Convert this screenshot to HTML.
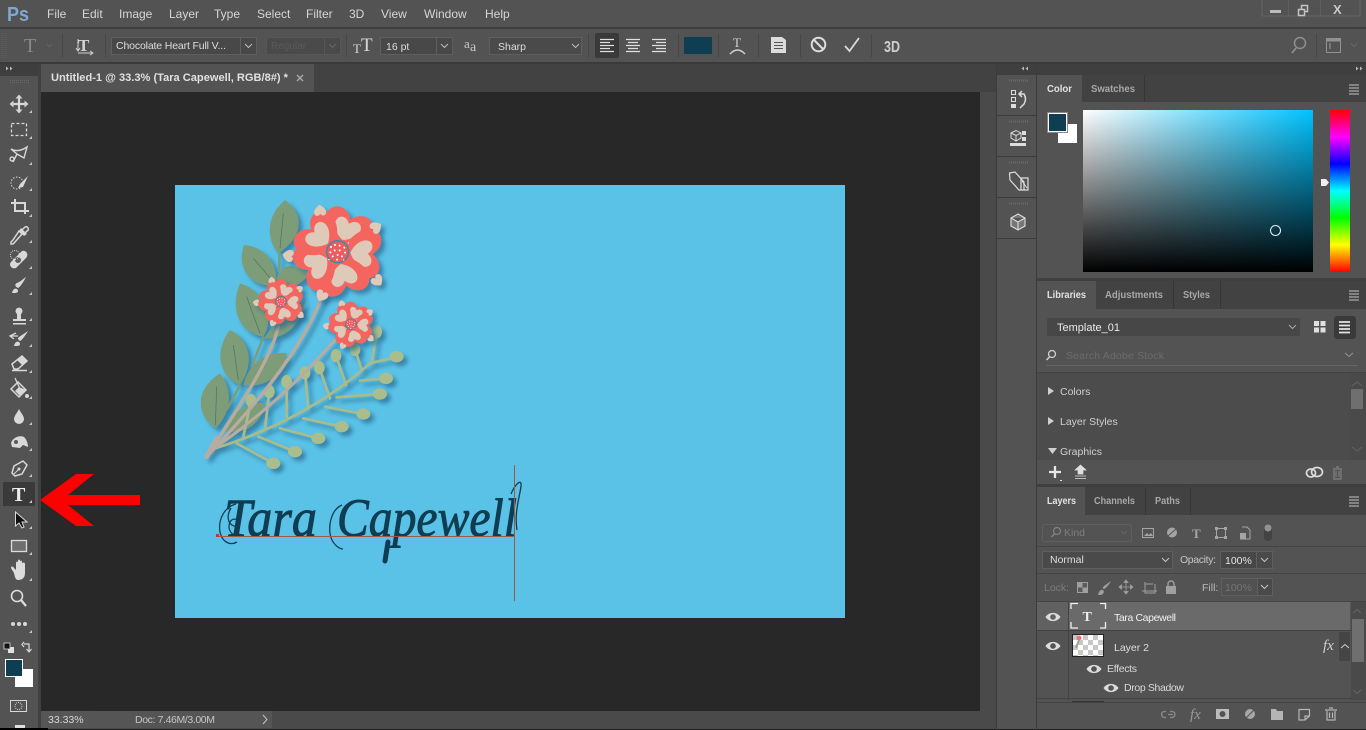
<!DOCTYPE html>
<html><head><meta charset="utf-8"><title>Photoshop</title>
<style>
html,body{margin:0;padding:0;background:#535353;overflow:hidden}
svg{display:block;font-family:"Liberation Sans",sans-serif;font-size:11px}
.m{fill:#d6d6d6;font-size:12px}
.t{fill:#e2e2e2;font-weight:bold;font-size:10px}
.d{fill:#a8a8a8;font-weight:bold;font-size:10px}
.l{fill:#cfcfcf;font-size:10.5px}
.i{fill:#d4d4d4}
.s{fill:none;stroke:#d4d4d4;stroke-width:1.5}
.tri{fill:#c8c8c8}
</style></head><body>
<svg width="1366" height="730" viewBox="0 0 1366 730" xmlns="http://www.w3.org/2000/svg">
<defs>
<linearGradient id="gh" x1="0" x2="1" y1="0" y2="0"><stop offset="0" stop-color="#fff"/><stop offset="1" stop-color="#00c2ff"/></linearGradient>
<linearGradient id="gv" x1="0" x2="0" y1="0" y2="1"><stop offset="0" stop-color="#000" stop-opacity="0"/><stop offset="1" stop-color="#000"/></linearGradient>
<linearGradient id="hue" x1="0" x2="0" y1="0" y2="1"><stop offset="0" stop-color="#f00"/><stop offset=".167" stop-color="#f0f"/><stop offset=".333" stop-color="#00f"/><stop offset=".5" stop-color="#0ff"/><stop offset=".667" stop-color="#0f0"/><stop offset=".833" stop-color="#ff0"/><stop offset="1" stop-color="#f00"/></linearGradient>
<filter id="sh" x="-20%" y="-20%" width="150%" height="150%"><feDropShadow dx="12" dy="12" stdDeviation="6" flood-color="#22658a" flood-opacity=".65"/></filter>
<g id="petal">
<path fill="#f4655f" d="M0 -10C-62 -38 -88 -86 -66 -116C-50 -136 -15 -130 0 -104C15 -130 50 -136 66 -116C88 -86 62 -38 0 -10Z"/>
<path fill="#dfc9b8" d="M0 -38C-34 -52 -47 -80 -36 -96C-27 -108 -9 -104 0 -90C9 -104 27 -108 36 -96C47 -80 34 -52 0 -38Z"/>
</g>
<g id="flower">
<use href="#petal" transform="rotate(22)"/><use href="#petal" transform="rotate(94)"/><use href="#petal" transform="rotate(166)"/><use href="#petal" transform="rotate(238)"/><use href="#petal" transform="rotate(310)"/>
<circle r="35" fill="#2a8fab"/><circle r="31" fill="#ef5b60"/>
<g fill="#fff"><circle cx="-20" cy="-14" r="3"/><circle cx="-8" cy="-20" r="3"/><circle cx="6" cy="-18" r="3"/><circle cx="20" cy="-12" r="3"/><circle cx="-22" cy="2" r="3"/><circle cx="-9" cy="-4" r="3"/><circle cx="6" cy="-4" r="3"/><circle cx="22" cy="3" r="3"/><circle cx="-15" cy="14" r="3"/><circle cx="0" cy="10" r="3"/><circle cx="13" cy="14" r="3"/><circle cx="-2" cy="24" r="3"/><circle cx="18" cy="25" r="2"/><circle cx="-26" cy="24" r="2"/><circle cx="32" cy="-26" r="2"/></g>
</g>
<path id="mini" fill="#dfc9b8" d="M0 18C-16 8 -22 -4 -16 -12C-10 -18 -3 -15 0 -9C3 -15 10 -18 16 -12C22 -4 16 8 0 18Z"/>
<path id="eye" d="M-7.5 0C-4 -5.5 4 -5.5 7.5 0C4 5.500 -4 5.500 -7.5 0ZM0 -2.800A2.800 2.800 0 1 0 0.010 -2.800Z" fill="#dcdcdc" fill-rule="evenodd"/>
<path id="cor" d="M3 0V3H0Z"/>
<pattern id="chk" width="10" height="10" patternUnits="userSpaceOnUse" x="1073" y="635"><rect width="10" height="10" fill="#fff"/><rect width="5" height="5" fill="#c8c8c8"/><rect x="5" y="5" width="5" height="5" fill="#c8c8c8"/></pattern>
</defs>

<!-- base -->
<rect width="1366" height="730" fill="#535353"/>
<rect y="27" width="1366" height="2" fill="#3d3d3d"/>
<rect y="62" width="1366" height="2" fill="#3a3a3a"/>

<!-- menu -->
<text x="7" y="21" font-size="20" font-weight="bold" fill="#7ea8d2" textLength="22" lengthAdjust="spacingAndGlyphs">Ps</text>
<text class="m" x="47" y="18">File</text><text class="m" x="82" y="18">Edit</text><text class="m" x="119" y="18">Image</text><text class="m" x="169" y="18">Layer</text><text class="m" x="214" y="18">Type</text><text class="m" x="257" y="18">Select</text><text class="m" x="306" y="18">Filter</text><text class="m" x="349" y="18">3D</text><text class="m" x="381" y="18">View</text><text class="m" x="424" y="18">Window</text><text class="m" x="485" y="18">Help</text>
<!-- window controls -->
<path d="M1262 0V15.500Q1262 16 1264 16H1358Q1360 16 1360 15V0" fill="none" stroke="#666"/>
<path d="M1288.500 0V16M1320.500 0V16" stroke="#5f5f5f"/>
<rect x="1270" y="10" width="11" height="3" fill="#bbb"/>
<path d="M1298.500 9.500h6v6h-6zM1301.500 9V5.500h6v6H1305" fill="none" stroke="#c4c4c4" stroke-width="1.500"/>
<text x="1333" y="14" font-size="13" font-weight="bold" fill="#c8c8c8">X</text>

<!-- options bar -->
<path d="M2 33V58M4 33V58M6 33V58" stroke="#5f5f5f" stroke-dasharray="1 1"/>
<text x="24" y="52" font-family="Liberation Serif" font-size="20" fill="#888">T</text>
<path d="M47 44l2.500 3 2.500-3" fill="none" stroke="#666"/>
<path d="M62.500 34V57M105.500 34V57M346.500 34V57M588.500 34V57M678.500 34V57M718.500 34V57M758.500 34V57M800.500 34V57M871.500 34V57M1316.500 34V57" stroke="#464646"/>
<text x="78" y="51" font-family="Liberation Serif" font-weight="bold" font-size="17" fill="#d0d0d0">T</text>
<path d="M78 39V50M76 48l2 3 2-3M78 53H92M90 51l3 2-3 2" fill="none" stroke="#d0d0d0"/>
<g fill="#484848" stroke="#5f5f5f">
<rect x="111.500" y="37.500" width="129" height="17"/><rect x="240.500" y="37.500" width="16" height="17"/>
<rect x="380.500" y="37.500" width="56" height="17"/><rect x="436.500" y="37.500" width="16" height="17"/>
<rect x="489.500" y="37.500" width="92" height="17" fill="#4a4a4a"/>
</g>
<g fill="#4a4a4a" stroke="#575757"><rect x="266.500" y="37.500" width="58" height="17"/><rect x="324.500" y="37.500" width="16" height="17"/></g>
<text x="116" y="49" fill="#dedede" font-size="10.500" textLength="110">Chocolate Heart Full V...</text>
<text x="271" y="49" fill="#5a5a5a" font-size="10">Regular</text>
<text x="386" y="50" fill="#dedede" font-size="10.500">16 pt</text>
<text x="498" y="50" fill="#dedede" font-size="10.500">Sharp</text>
<path d="M245 44l3.500 3.500 3.500-3.500M441 44l3.500 3.500 3.500-3.500M572 44l3.500 3.500 3.500-3.500" fill="none" stroke="#bcbcbc"/>
<path d="M329 44l3.500 3.500 3.500-3.500" fill="none" stroke="#696969"/>
<text x="353" y="53" font-family="Liberation Serif" font-size="13" fill="#d8d8d8">T</text>
<text x="361" y="51" font-family="Liberation Serif" font-size="19" fill="#d8d8d8">T</text>
<text x="464" y="48" font-family="Liberation Serif" font-size="13" fill="#c8c8c8">a</text>
<text x="470" y="51" font-family="Liberation Serif" font-size="14" fill="#c8c8c8">a</text>
<rect x="595" y="33" width="24" height="25" rx="2" fill="#3a3a3a"/>
<g fill="none" stroke="#e0e0e0" stroke-width="1.300">
<path d="M600 39.500h14M600 42.500h10M600 45.500h14M600 48.500h10M600 51.500h14"/>
<path d="M626 39.500h14M628 42.500h10M626 45.500h14M628 48.500h10M626 51.500h14"/>
<path d="M652 39.500h14M656 42.500h10M652 45.500h14M656 48.500h10M652 51.500h14"/>
</g>
<rect x="684" y="37" width="28" height="17" fill="#0f3d52"/>
<text x="733" y="47" font-family="Liberation Serif" font-size="13" fill="#d0d0d0">T</text>
<path d="M730 54Q737.500 46 745 54" fill="none" stroke="#d0d0d0" stroke-width="1.500"/>
<path d="M771 37h11l4 3v13h-15z" fill="#dcdcdc"/><path d="M774 42.500h9M774 45.500h9M774 48.500h9" stroke="#555"/>
<circle cx="818.500" cy="44.500" r="6.800" fill="none" stroke="#dcdcdc" stroke-width="2"/><path d="M814 40l9 9" stroke="#dcdcdc" stroke-width="2"/>
<path d="M845 46l4.500 5L859 38" fill="none" stroke="#dcdcdc" stroke-width="1.800"/>
<text x="884" y="52" font-size="16" font-weight="bold" fill="#cfcfcf" textLength="16" lengthAdjust="spacingAndGlyphs">3D</text>
<circle cx="1300" cy="43" r="5.500" fill="none" stroke="#8e8e8e" stroke-width="1.500"/><path d="M1296 48l-4 5" stroke="#8e8e8e" stroke-width="1.800"/>
<rect x="1326.500" y="38.500" width="14" height="14" fill="none" stroke="#929292"/><rect x="1327" y="39" width="13" height="2.500" fill="#929292"/><rect x="1329" y="43" width="2" height="6" fill="#777"/>
<path d="M1351 43.500l3 3 3-3" fill="none" stroke="#696969"/>

<!-- left tools column -->
<rect x="0" y="64" width="38" height="12" fill="#3e3e3e"/>
<rect x="38" y="64" width="3" height="666" fill="#404040"/>
<path d="M6 66.500l2.500 2-2.500 2zM10 66.500l2.500 2-2.500 2z" fill="#b9b9b9"/>
<path d="M10 80.500H29M10 82.500H29" stroke="#686868" stroke-dasharray="1 1"/>

<!-- tab bar / canvas -->
<rect x="41" y="64" width="956" height="28" fill="#424242"/>
<rect x="41" y="64" width="273" height="28" fill="#535353"/>
<text x="51" y="81" font-size="11" font-weight="bold" fill="#e0e0e0" textLength="237" lengthAdjust="spacingAndGlyphs">Untitled-1 @ 33.3% (Tara Capewell, RGB/8#) *</text>
<path d="M297 75l6 6M303 75l-6 6" stroke="#a5a5a5" stroke-width="1.500"/>
<rect x="41" y="92" width="939" height="619" fill="#282828"/>
<rect x="980" y="92" width="17" height="619" fill="#4a4a4a"/>
<rect x="41" y="711" width="956" height="18" fill="#4a4a4a"/>
<rect x="41" y="711" width="48" height="17" fill="#565656"/>
<rect x="89" y="711" width="183" height="17" fill="#555"/>
<text x="48" y="723" font-size="10.500" fill="#d6d6d6">33.33%</text>
<text x="135" y="723" font-size="10.500" fill="#c4c4c4" textLength="80">Doc: 7.46M/3.00M</text>
<path d="M263 715l4 4.500-4 4.500" fill="none" stroke="#c4c4c4"/>
<rect x="0" y="728" width="48" height="2" fill="#000"/>
<rect x="48" y="729" width="1318" height="1" fill="#1e1e1e"/>

<!-- document -->
<rect x="175" y="185" width="670" height="433" fill="#5bc2e7"/>

<g transform="translate(190 190) scale(.33333)">
<g filter="url(#sh)">
<g fill="#7d9c78">
<path d="M285 30C225 80 230 150 265 190C340 140 345 75 285 30Z"/>
<path d="M162 165C135 240 190 295 255 285C270 225 225 170 162 165Z"/>
<path d="M150 280C115 365 155 430 220 440C260 375 215 300 150 280Z"/>
<path d="M120 420C65 490 95 565 150 585C195 520 180 450 120 420Z"/>
<path d="M90 550C10 600 20 680 78 715C130 660 125 590 90 550Z"/>
<path d="M355 255C310 210 270 225 258 270C285 300 325 295 355 255Z"/>
<path d="M345 330C330 350 250 400 222 445C290 450 340 395 345 330Z"/>
<path d="M290 490C225 480 175 525 160 585C225 595 285 555 290 490Z"/>
<path d="M225 640C175 630 115 675 98 722C155 740 215 705 225 640Z"/>
</g>
<g fill="none" stroke="#7d9c78" stroke-width="7"><path d="M268 190V245M220 440L185 530M150 585L110 660"/></g>
<g fill="none" stroke="#4c6f66" stroke-width="2"><path d="M280 70L270 175M190 205L250 275M170 320L210 430M130 465L145 570M80 590L76 705"/></g>
<g fill="none" stroke="#a7bb8c" stroke-width="8" stroke-linecap="round">
<path d="M75 775Q350 690 540 520L620 500"/>
<path d="M250 820L140 760M315 785L205 740M385 745L270 715M455 710L340 685M520 672L405 650M570 612L440 622M588 565L510 572"/>
<path d="M183 632L160 740M238 605L225 715M290 575L290 680M345 548L355 655M388 533L420 625M438 497L468 585M495 478L515 540M560 425L545 520"/>
</g>
<g fill="#a9bd8d">
<ellipse cx="250" cy="820" rx="21" ry="17"/><ellipse cx="315" cy="785" rx="21" ry="17"/><ellipse cx="385" cy="745" rx="21" ry="17"/><ellipse cx="455" cy="710" rx="21" ry="17"/><ellipse cx="520" cy="672" rx="21" ry="17"/><ellipse cx="570" cy="612" rx="21" ry="17"/><ellipse cx="588" cy="565" rx="21" ry="17"/><ellipse cx="620" cy="500" rx="21" ry="17"/>
<ellipse cx="560" cy="425" rx="16" ry="20"/><ellipse cx="495" cy="478" rx="16" ry="20"/><ellipse cx="438" cy="497" rx="16" ry="20"/><ellipse cx="388" cy="533" rx="16" ry="20"/><ellipse cx="345" cy="548" rx="16" ry="20"/><ellipse cx="290" cy="575" rx="16" ry="20"/><ellipse cx="238" cy="605" rx="16" ry="20"/><ellipse cx="183" cy="632" rx="16" ry="20"/>
</g>
<g fill="none" stroke="#b8aca0" stroke-linecap="round">
<path stroke-width="10" d="M50 800C120 690 240 520 265 410"/>
<path stroke-width="10" d="M50 800C200 640 370 450 425 235"/>
<path stroke-width="9" d="M50 790C200 690 330 570 435 450"/>
<path stroke-width="14" d="M50 800L80 745"/>
</g>
</g>
<g filter="url(#sh)">
<use href="#flower" transform="translate(443 185)"/>
<use href="#mini" transform="translate(390 62) rotate(175)"/>
<use href="#mini" transform="translate(558 112) rotate(235)"/>
<use href="#mini" transform="translate(562 272) rotate(320)"/>
<use href="#mini" transform="translate(395 317) rotate(30)"/>
<use href="#mini" transform="translate(295 197) rotate(100)"/>
</g>
<g filter="url(#sh)">
<use href="#flower" transform="translate(273 335) scale(.5)"/>
<use href="#mini" transform="translate(245 270) rotate(170) scale(.55)"/><use href="#mini" transform="translate(330 296) rotate(235) scale(.55)"/><use href="#mini" transform="translate(333 376) rotate(310) scale(.55)"/><use href="#mini" transform="translate(248 400) rotate(30) scale(.55)"/><use href="#mini" transform="translate(198 338) rotate(100) scale(.55)"/>
</g>
<g filter="url(#sh)">
<use href="#flower" transform="translate(483 403) scale(.5)"/>
<use href="#mini" transform="translate(455 340) rotate(170) scale(.55)"/><use href="#mini" transform="translate(540 366) rotate(235) scale(.55)"/><use href="#mini" transform="translate(543 446) rotate(310) scale(.55)"/><use href="#mini" transform="translate(458 468) rotate(30) scale(.55)"/><use href="#mini" transform="translate(408 408) rotate(100) scale(.55)"/>
</g>
</g>

<!-- script text -->
<g font-family="Liberation Serif" font-style="italic" font-size="54" fill="#0f3d52" stroke="#0f3d52" stroke-width=".9">
<text x="224" y="536" textLength="93" lengthAdjust="spacingAndGlyphs">Tara</text>
<text x="337" y="536" textLength="180" lengthAdjust="spacingAndGlyphs">Capewell</text>
</g>
<g fill="none" stroke="#0f3d52" stroke-width="1.300">
<path d="M236 504C224 507 218 520 220 532C222 542 230 546 237 542"/>
<path d="M231 508C226 516 228 524 234 526C240 527 240 519 234 519C228 520 226 532 236 536"/>
<path d="M342 505C330 510 327 530 332 540C335 546 340 549 343 549"/>
<path d="M511 494C515 484 522 478 521 486C520 496 514 512 517 530"/>
</g>
<path d="M388 542L385 561" stroke="#0f3d52" stroke-width="5" stroke-linecap="round"/>
<path d="M216 536.500H514.500M514.500 465V601" stroke="#a5573f" stroke-width="1" fill="none"/>
<rect x="216" y="534" width="3" height="3" fill="#d9301f"/>

<!-- red arrow -->
<path d="M40 500L76 474H94L68 495H140V505H68L94 526H76Z" fill="#fd0000"/>

<!-- tools -->
<rect x="3" y="482" width="32" height="24" rx="1" fill="#3a3a3a"/>
<g class="i">
<path d="M11 104h16M19 96v16" stroke="#d8d8d8" stroke-width="2.200"/>
<path d="M19 94.500l3.500 4h-7zM19 113.500l3.500-4h-7zM9.500 104l4-3.500v7zM28.500 104l-4-3.500v7z"/>
</g>
<rect x="11.500" y="123.500" width="15" height="12" fill="none" stroke="#d8d8d8" stroke-width="1.300" stroke-dasharray="3 2"/>
<path d="M11 149Q18 153 27 147L24 158L17 154ZM17 154L13 162M12 157a2 2 0 1 0 .1 0" fill="none" stroke="#d8d8d8" stroke-width="1.400"/>
<circle cx="17" cy="183" r="6" fill="none" stroke="#d8d8d8" stroke-dasharray="1.500 1.500"/><path d="M28 176L20 184L18 188L23 187Z" fill="#d8d8d8"/>
<path d="M11 203h4v-4M15 203V211h10M15 203h10v11M25 211h4" fill="none" stroke="#d8d8d8" stroke-width="2"/>
<path d="M13 240L11 242V244H13L15 242L22 234L19 231ZM22 230L25 227Q27 226 28 228Q29 230 27 231L24 234Z" fill="none" stroke="#d8d8d8" stroke-width="1.500"/><path d="M21 228L27 234L24 236L19 231Z" fill="#d8d8d8"/>
<path d="M11 262L22 251Q25 250 27 253Q28 256 26 258L16 268Q13 269 11 267Q9 264 11 262Z" fill="#d8d8d8"/><circle cx="18" cy="260" r="3" fill="#5b5b5b"/><circle cx="15" cy="255" r="4.500" fill="none" stroke="#d8d8d8" stroke-dasharray="1 1"/>
<path d="M26 277C23 283 20 287 18 288C14 286 15 284 17 283C20 282 23 279 26 277ZM12 293C13 289 15 288 17 289C19 291 18 293 15 293Z" fill="#d8d8d8"/>
<path d="M13 321V319H17V314A3.500 3.500 0 1 1 21 314V319H26V321ZM13 323H26V324.500H13Z" fill="#d8d8d8"/>
<path d="M28 331C25 336 22 340 20 341C17 339 18 338 19 337C22 335 25 333 28 331ZM14 346C15 342 17 341 19 342C21 344 20 346 17 346Z" fill="#d8d8d8"/><path d="M16 333L10 336L14 339M10 336H18" fill="none" stroke="#d8d8d8" stroke-width="1.300"/>
<path d="M12 364L22 356L27 361L18 369H14ZM12 370.500H27" fill="none" stroke="#d8d8d8" stroke-width="1.500"/><path d="M17 360L22 356L27 361L22 365Z" fill="#d8d8d8"/>
<path d="M11 389L18 382L26 390L19 397Z" fill="none" stroke="#d8d8d8" stroke-width="1.500"/><path d="M15 378L21 391" stroke="#d8d8d8" stroke-width="1.300"/><circle cx="27" cy="396" r="2" fill="#d8d8d8"/><path d="M19 387L26 390L20 396L15 391Z" fill="#d8d8d8"/>
<path d="M19 409C21 413 24 416 24 419A5 5 0 0 1 14 419C14 416 17 413 19 409Z" fill="#d8d8d8"/>
<path d="M11 443C13 437 20 435 24 437C27 440 28 444 28 447L23 445L20 448L12 447Z" fill="#d8d8d8"/><circle cx="16" cy="442" r="2" fill="#5b5b5b"/>
<path d="M12 473L14 466L23 461L27 465L22 474L15 476Z" fill="none" stroke="#d8d8d8" stroke-width="1.500"/><circle cx="19" cy="469" r="1.500" fill="#d8d8d8"/><path d="M13 475L18 470" stroke="#d8d8d8"/>
<text x="12" y="501" font-family="Liberation Serif" font-weight="bold" font-size="20" fill="#ececec">T</text>
<path d="M15.500 512V526L19 523L22 528L24 527L22 522H27Z" fill="#111" stroke="#d8d8d8" stroke-width="1"/>
<rect x="11.500" y="540.500" width="15" height="11" fill="#6f6f6f" stroke="#dcdcdc" stroke-width="1.300"/>
<path d="M14 573L11 568C11 566 13 566 14 568L16 570V563C16 561 18 561 18 563V568V561C18 559 20 559 20 561V568V562C20 560 22 560 22 562V569V564C22 562 25 562 25 564V573C25 578 22 580 18 580C16 580 15 578 14 573Z" fill="#dcdcdc"/>
<circle cx="17" cy="596" r="5.500" fill="none" stroke="#dcdcdc" stroke-width="1.600"/><path d="M21 600L26 606" stroke="#dcdcdc" stroke-width="2.300"/>
<circle cx="13" cy="624" r="2" fill="#d8d8d8"/><circle cx="19" cy="624" r="2" fill="#d8d8d8"/><circle cx="25" cy="624" r="2" fill="#d8d8d8"/>
<g class="tri">
<use href="#cor" x="29" y="110"/><use href="#cor" x="29" y="136"/><use href="#cor" x="29" y="162"/><use href="#cor" x="29" y="188"/><use href="#cor" x="29" y="214"/><use href="#cor" x="29" y="240"/><use href="#cor" x="29" y="266"/><use href="#cor" x="29" y="292"/><use href="#cor" x="29" y="318"/><use href="#cor" x="29" y="344"/><use href="#cor" x="29" y="370"/><use href="#cor" x="29" y="396"/><use href="#cor" x="29" y="422"/><use href="#cor" x="29" y="448"/><use href="#cor" x="29" y="474"/><use href="#cor" x="29" y="500"/><use href="#cor" x="29" y="526"/><use href="#cor" x="29" y="552"/><use href="#cor" x="29" y="578"/><use href="#cor" x="29" y="630"/>
</g>
<!-- colours -->
<rect x="8" y="647" width="6" height="6" fill="#e0e0e0"/><rect x="4" y="643" width="6" height="6" fill="#111" stroke="#ddd" stroke-width=".8"/>
<path d="M24 644H29V651M26.500 649L29 652L31.500 649M24 642L22 644.500L24 647" fill="none" stroke="#d8d8d8" stroke-width="1.200"/>
<rect x="15" y="669" width="18" height="18" fill="#fff"/>
<rect x="5.500" y="659.500" width="17" height="17" fill="#0f3d52" stroke="#fff"/>
<rect x="10.500" y="700.500" width="16" height="11" fill="none" stroke="#d8d8d8"/><circle cx="18.500" cy="706" r="3.500" fill="none" stroke="#d8d8d8" stroke-dasharray="1 1"/>
<rect x="15" y="725" width="10" height="3" fill="#ddd"/>

<!-- right dock -->
<rect x="997" y="64" width="369" height="11" fill="#3f3f3f"/>
<rect x="1036" y="64" width="1" height="666" fill="#3c3c3c"/>
<rect x="996" y="64" width="1" height="666" fill="#3c3c3c"/>
<path d="M1028 66.500l-2.500 2 2.500 2zM1024 66.500l-2.500 2 2.500 2z" fill="#b9b9b9"/>
<path d="M1356 66.500l2.500 2-2.500 2zM1360 66.500l2.500 2-2.500 2z" fill="#b9b9b9"/>
<path d="M997 115.500H1036M997 156.500H1036M997 197.500H1036M997 238.500H1036" stroke="#3c3c3c"/>
<path d="M1009 80.500H1028M1009 121.500H1028M1009 162.500H1028M1009 203.500H1028" stroke="#6b6b6b" stroke-dasharray="1 1" stroke-width="2"/>
<path d="M1011.500 90.500h4v4h-4zM1011.500 97.500h4v4h-4z" fill="none" stroke="#ddd"/><rect x="1011" y="104" width="5" height="4" fill="#ddd"/>
<path d="M1019 94H1024Q1027 99 1024 104L1020 108M1022 91L1019 94L1022 97" fill="none" stroke="#ddd" stroke-width="1.500"/>
<path d="M1011 133L1016 130.500L1021 133V138L1016 141L1011 138Z M1011 133L1016 135.500L1021 133M1016 135.500V141" fill="none" stroke="#ddd"/><rect x="1022" y="131" width="4" height="4" fill="#ddd"/><rect x="1022" y="137" width="4" height="4" fill="#ddd"/><rect x="1010" y="143" width="16" height="3" fill="#ddd"/>
<path d="M1009.500 173L1015 172L1024 182V190L1019 190L1010 180ZM1021 178H1028V190H1021Z" fill="none" stroke="#ddd" stroke-width="1.200"/><path d="M1022 181L1027 188" stroke="#ddd"/>
<path d="M1018 214L1025 218V226L1018 230L1011 226V218ZM1011 218L1018 222L1025 218M1018 222V230" fill="#777" stroke="#ddd" stroke-width="1.100"/>

<!-- color panel -->
<rect x="1037" y="75" width="329" height="27" fill="#424242"/>
<rect x="1037" y="75" width="45" height="27" fill="#535353"/>
<path d="M1144.500 75V102" stroke="#363636"/>
<text class="t" x="1047" y="92" textLength="25" lengthAdjust="spacingAndGlyphs">Color</text><text class="d" x="1091" y="92" textLength="44" lengthAdjust="spacingAndGlyphs">Swatches</text>
<path d="M1349 85h10M1349 88h10M1349 91h10M1349 94h10" stroke="#c4c4c4"/>
<rect x="1058" y="124" width="19" height="19" fill="#fff"/>
<rect x="1047" y="112" width="21" height="21" fill="#888"/>
<rect x="1048" y="113" width="19" height="19" fill="#fff"/>
<rect x="1049" y="114" width="17" height="17" fill="#0f3d52"/>
<rect x="1083" y="110" width="230" height="162" fill="url(#gh)"/>
<rect x="1083" y="110" width="230" height="162" fill="url(#gv)"/>
<circle cx="1275.500" cy="230.500" r="5" fill="none" stroke="#dcecf2" stroke-width="1.100"/>
<rect x="1330" y="110" width="20" height="162" fill="url(#hue)"/>
<path d="M1321 179H1326L1329 182.500L1326 186H1321Z" fill="#eee"/>
<rect x="1037" y="278" width="329" height="3" fill="#3f3f3f"/>

<!-- libraries -->
<rect x="1037" y="281" width="329" height="28" fill="#424242"/>
<rect x="1037" y="281" width="59" height="28" fill="#535353"/>
<path d="M1173.500 281V309M1220.500 281V309" stroke="#363636"/>
<text class="t" x="1047" y="298" textLength="39" lengthAdjust="spacingAndGlyphs">Libraries</text><text class="d" x="1105" y="298" textLength="58" lengthAdjust="spacingAndGlyphs">Adjustments</text><text class="d" x="1183" y="298" textLength="27" lengthAdjust="spacingAndGlyphs">Styles</text>
<path d="M1349 291h10M1349 294h10M1349 297h10M1349 300h10" stroke="#c4c4c4"/>
<rect x="1047" y="318" width="253" height="18" rx="2" fill="#474747"/>
<text x="1057" y="331" fill="#eaeaea" font-size="11">Template_01</text>
<path d="M1289 325l3.500 3.500 3.500-3.500" fill="none" stroke="#aaa"/>
<path d="M1314 321h5v5h-5zM1320.500 321h5v5h-5zM1314 327.500h5v5h-5zM1320.500 327.500h5v5h-5z" fill="#e0e0e0"/>
<rect x="1334" y="316" width="22" height="23" rx="3" fill="#3a3a3a"/>
<path d="M1339 322h11M1339 325.500h11M1339 329h11M1339 332.500h11" stroke="#e4e4e4" stroke-width="1.800"/>
<circle cx="1052" cy="354" r="3.500" fill="none" stroke="#d0d0d0" stroke-width="1.300"/><path d="M1049.500 357l-3 3" stroke="#d0d0d0" stroke-width="1.500"/>
<text x="1066" y="359" fill="#6c6c6c" font-size="10.500" textLength="98">Search Adobe Stock</text>
<path d="M1345 353l4 3.500 4-3.500" fill="none" stroke="#959595"/>
<path d="M1046 365.500H1358" stroke="#666"/>
<rect x="1037" y="372" width="329" height="1" fill="#444"/>
<rect x="1037" y="373" width="313" height="87" fill="#4c4c4c"/>
<rect x="1350" y="373" width="16" height="87" fill="#4a4a4a"/>
<path d="M1352 386l5-4 5 4M1352 447l5 4 5-4" fill="none" stroke="#636363"/>
<rect x="1351" y="389" width="12" height="20" fill="#6f6f6f"/>
<path d="M1048 387l6 4-6 4zM1048 417l6 4-6 4z" fill="#cfcfcf"/><path d="M1048 448h9l-4.500 6z" fill="#cfcfcf"/>
<text class="l" x="1060" y="395">Colors</text><text class="l" x="1060" y="425">Layer Styles</text><text class="l" x="1060" y="455">Graphics</text>
<path d="M1055 466V478M1049 472H1061" stroke="#e6e6e6" stroke-width="2.300"/><rect x="1060" y="480" width="2" height="1" fill="#ddd"/>
<path d="M1080.500 465L1086 470H1083V474H1078V470H1075ZM1075 476H1086M1075 478.500H1086" fill="#e0e0e0" stroke="#e0e0e0" stroke-width=".7"/>
<ellipse cx="1311" cy="473" rx="4.500" ry="4" fill="none" stroke="#dcdcdc" stroke-width="1.700"/><ellipse cx="1317" cy="472" rx="5.500" ry="4.500" fill="none" stroke="#dcdcdc" stroke-width="1.700"/>
<path d="M1333 469H1342M1334 470V479H1341V470M1336 471V477M1339 471V477M1336 467H1339" fill="none" stroke="#818181" stroke-width="1.200"/>
<rect x="1037" y="484" width="329" height="3" fill="#3f3f3f"/>

<!-- layers -->
<rect x="1037" y="487" width="329" height="28" fill="#424242"/>
<rect x="1037" y="487" width="48" height="28" fill="#535353"/>
<path d="M1145.500 487V515M1190.500 487V515" stroke="#363636"/>
<text class="t" x="1047" y="504" textLength="29" lengthAdjust="spacingAndGlyphs">Layers</text><text class="d" x="1094" y="504" textLength="41" lengthAdjust="spacingAndGlyphs">Channels</text><text class="d" x="1155" y="504" textLength="25" lengthAdjust="spacingAndGlyphs">Paths</text>
<path d="M1349 497h10M1349 500h10M1349 503h10M1349 506h10" stroke="#c4c4c4"/>
<rect x="1042.500" y="524.500" width="89" height="17" rx="2" fill="#535353" stroke="#5f5f5f"/>
<circle cx="1057" cy="531" r="3.500" fill="none" stroke="#808080" stroke-width="1.300"/><path d="M1054.500 534l-3 3" stroke="#808080" stroke-width="1.500"/>
<text x="1064" y="536" fill="#7e7e7e" font-size="10.500">Kind</text>
<path d="M1121 531l3 3 3-3" fill="none" stroke="#666"/>
<rect x="1142.500" y="528.500" width="11" height="9" fill="none" stroke="#a5a5a5"/><path d="M1144 536l3-3 2 2 2-2 2 3z" fill="#a5a5a5"/>
<circle cx="1172" cy="532.500" r="5" fill="#a5a5a5"/><path d="M1168 536l8-7" stroke="#535353"/>
<text x="1192" y="538" font-family="Liberation Serif" font-weight="bold" font-size="13" fill="#a5a5a5">T</text>
<rect x="1216.500" y="528.500" width="9" height="9" fill="none" stroke="#a5a5a5"/><path d="M1215 527h3v3h-3zM1224 527h3v3h-3zM1215 536h3v3h-3zM1224 536h3v3h-3z" fill="#a5a5a5"/>
<path d="M1242 527H1247L1250 530V539H1240" fill="none" stroke="#a5a5a5"/><rect x="1240" y="533" width="6" height="6" fill="#a5a5a5"/>
<rect x="1264" y="526" width="8" height="15" rx="4" fill="#434343"/><circle cx="1268" cy="528" r="3.500" fill="#939393"/>
<rect x="1037" y="546" width="329" height="1" fill="#444"/>
<rect x="1042.500" y="551.500" width="130" height="17" fill="#4a4a4a" stroke="#5f5f5f"/>
<text x="1050" y="563" fill="#dedede" font-size="10.500">Normal</text>
<path d="M1162 558l3.500 3.500 3.500-3.500" fill="none" stroke="#c4c4c4"/>
<text x="1180" y="563" fill="#c4c4c4" font-size="10.500" textLength="36">Opacity:</text>
<rect x="1220.500" y="551.500" width="36" height="17" fill="#474747" stroke="#5f5f5f"/><rect x="1256.500" y="551.500" width="16" height="17" fill="#4a4a4a" stroke="#5f5f5f"/>
<text x="1225" y="564" fill="#e2e2e2" font-size="10.500">100%</text>
<path d="M1261 558l3.500 3.500 3.500-3.500" fill="none" stroke="#c4c4c4"/>
<rect x="1037" y="573" width="329" height="1" fill="#444"/>
<text x="1044" y="591" fill="#7d7d7d" font-size="10.500">Lock:</text>
<rect x="1077" y="582" width="11" height="11" fill="#9f9f9f"/><path d="M1082.500 582h5.500v5.500h-5.500zM1077 587.500h5.500v5.500H1077z" fill="#5b5b5b"/><rect x="1077.500" y="582.500" width="10" height="10" fill="none" stroke="#9f9f9f"/>
<path d="M1111 581C1108 586 1106 588 1104 589C1102 588 1103 587 1104 586ZM1098 595C1099 591 1101 589 1103 590C1105 592 1103 595 1100 595Z" fill="#9f9f9f"/>
<path d="M1120 587h12M1126 581v12M1126 580l2 2.500h-4zM1126 594l2-2.500h-4zM1119 587l2.500-2v4zM1133 587l-2.500-2v4z" fill="#9f9f9f" stroke="#9f9f9f" stroke-width=".8"/>
<path d="M1145 582V593H1155V584M1142 591H1157M1145 584H1153" fill="none" stroke="#9f9f9f"/>
<rect x="1166" y="586" width="10" height="8" fill="#9f9f9f"/><path d="M1168 586V584A3 3 0 0 1 1174 584V586" fill="none" stroke="#9f9f9f" stroke-width="1.400"/>
<text x="1202" y="591" fill="#b8b8b8" font-size="10.500">Fill:</text>
<rect x="1221.500" y="578.500" width="36" height="17" fill="#515151" stroke="#5f5f5f"/><rect x="1257.500" y="578.500" width="15" height="17" fill="#4a4a4a" stroke="#5f5f5f"/>
<text x="1225" y="591" fill="#737373" font-size="10.500">100%</text>
<path d="M1261 585l3.500 3.500 3.500-3.500" fill="none" stroke="#c4c4c4"/>
<rect x="1037" y="601" width="329" height="1" fill="#444"/>
<rect x="1037" y="602" width="313" height="28" fill="#6a6a6a"/>
<rect x="1037" y="602" width="31" height="28" fill="#616161"/>
<path d="M1037 630.500H1351M1037 698.500H1351" stroke="#424242"/>
<path d="M1068.500 602V700" stroke="#444"/>
<use href="#eye" x="1053" y="617"/><use href="#eye" x="1053" y="646"/>
<path d="M1071 609V603.500H1078M1100 603.500H1105.500V609M1071 622V628H1078M1100 628H1105.500V622" fill="none" stroke="#f0f0f0" stroke-width="1.300"/>
<text x="1082.500" y="621" font-family="Liberation Serif" font-weight="bold" font-size="14" fill="#eee">T</text>
<text x="1114" y="621" fill="#efefef" font-size="10.500" textLength="62">Tara Capewell</text>
<rect x="1072.500" y="634.500" width="31" height="22" fill="url(#chk)" stroke="#222"/>
<circle cx="1079" cy="638" r="2.500" fill="#e8757a"/><path d="M1076 648L1079 640" stroke="#9aa690" stroke-width="2"/>
<text x="1114" y="651" fill="#dedede" font-size="10.500">Layer 2</text>
<text x="1323" y="650" font-family="Liberation Serif" font-style="italic" font-size="15" fill="#cfcfcf">fx</text>
<rect x="1339" y="632" width="11" height="29" fill="#454545"/>
<path d="M1341 648l4-3.500 4 3.500" fill="none" stroke="#cfcfcf"/>
<use href="#eye" x="1094" y="669"/><text x="1107" y="672" fill="#d8d8d8" font-size="10.500" textLength="30">Effects</text>
<use href="#eye" x="1111" y="688"/><text x="1124" y="691" fill="#d8d8d8" font-size="10.500" textLength="60">Drop Shadow</text>
<rect x="1072" y="701" width="32" height="1" fill="#333"/>
<rect x="1351" y="602" width="15" height="98" fill="#4a4a4a"/>
<rect x="1352" y="619" width="12" height="43" fill="#6f6f6f"/>
<path d="M1353 613l4-3.500 4 3.500M1353 690l4 3.500 4-3.500" fill="none" stroke="#666"/>
<rect x="1037" y="702" width="329" height="1" fill="#444"/>
<!-- layers footer -->
<path d="M1168 714.500H1173M1166 711.500H1164.500A3 3 0 0 0 1164.500 717.500H1166M1170 711.500H1172A3 3 0 0 1 1172 717.500H1170" fill="none" stroke="#8b8b8b" stroke-width="1.300"/>
<text x="1190" y="719" font-family="Liberation Serif" font-style="italic" font-size="15" fill="#999">fx</text>
<rect x="1216" y="709" width="13" height="10" fill="#bcbcbc"/><circle cx="1222.500" cy="714" r="3" fill="#535353"/>
<circle cx="1250" cy="714" r="5" fill="#a7a7a7"/><path d="M1246 718l8-8" stroke="#535353"/>
<path d="M1271 709H1276L1277 711H1283V720H1271Z" fill="#b5b5b5"/>
<path d="M1299 709.500H1309.500V716L1305 720H1299ZM1309.500 716H1305V720" fill="none" stroke="#b5b5b5" stroke-width="1.200"/>
<path d="M1325 710H1337M1327 711V720H1335V711M1329.500 712.500V718M1332.500 712.500V718M1329 708H1333" fill="none" stroke="#b5b5b5" stroke-width="1.200"/>
</svg>
</body></html>
